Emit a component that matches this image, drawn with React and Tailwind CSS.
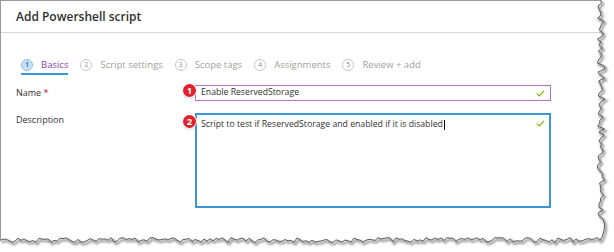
import React from "react";

const tabs = [
  { n: 1, label: "Basics", active: true },
  { n: 2, label: "Script settings" },
  { n: 3, label: "Scope tags" },
  { n: 4, label: "Assignments" },
  { n: 5, label: "Review + add" },
];

function rand(seed) {
  let s = seed;
  return () => {
    s = (s * 9301 + 49297) % 233280;
    return s / 233280;
  };
}

function tornPath() {
  const r = rand(7);
  const pts = [];
  for (let y = 0; y <= 238; y += 3) pts.push([601 + (r() - 0.5) * 8, y]);
  for (let x = 600; x >= 0; x -= 3) pts.push([x, 240 + (r() - 0.5) * 5]);
  return "M" + pts.map((p) => p[0].toFixed(1) + " " + p[1].toFixed(1)).join(" L");
}

function Check() {
  return (
    <svg width="9" height="7" viewBox="0 0 9 7" className="shrink-0">
      <path d="M0.8 3.6 L3.3 6 L8.2 0.9" fill="none" stroke="#6bb700" strokeWidth="1.1" />
    </svg>
  );
}

function Badge({ n, className }) {
  return (
    <span
      className={`absolute flex h-[13px] w-[13px] items-center justify-center rounded-full bg-[#e2212b] text-[9.5px] font-bold leading-none text-white shadow-[0_0_0_1px_#fff,0_1px_2px_rgba(0,0,0,0.5)] ${className}`}
    >
      {n}
    </span>
  );
}

export default function App() {
  const d = tornPath();
  return (
    <div className="relative h-[252px] w-[614px] overflow-hidden bg-white font-['Open_Sans',sans-serif] text-[#323130]">
      <div className="h-[240px] w-[601px] border-l border-t border-[#9a9a9a]">
        <div className="flex h-[32px] items-center border-b border-[#d6d6d6] pl-[15px] text-[12px] font-semibold">
          Add Powershell script
        </div>

        <div className="mt-[24px] flex items-center gap-[12px] pl-[20px]">
          {tabs.map((t) => (
            <div key={t.n} className="relative flex h-[16px] items-center gap-[8px]">
              <span
                className={
                  t.active
                    ? "flex h-[12px] w-[12px] items-center justify-center rounded-full border border-[#8cc0ea] bg-[#c7e0f4] text-[6.5px] font-semibold text-[#1a5fa0]"
                    : "flex h-[12px] w-[12px] items-center justify-center rounded-full border border-[#c8c6c4] bg-white text-[6.5px] text-[#8a8886]"
                }
              >
                {t.n}
              </span>
              <span className={t.active ? "text-[9.5px] text-[#8f44b0]" : "text-[9.5px] text-[#a19f9d]"}>{t.label}</span>
              {t.active && <span className="absolute bottom-[-2px] left-0 right-0 h-[2px] bg-[#3a96dd]" />}
            </div>
          ))}
        </div>

        <div className="mt-[12px] flex flex-col gap-[12px] pl-[15px]">
          <div className="flex items-start">
            <div className="w-[179px] pt-[1px] text-[9px] leading-[14px]">
              Name <span className="text-[#a4262c]">*</span>
            </div>
            <div className="relative flex h-[16px] w-[356px] items-center justify-between border border-[#b673c9] pl-[5px] pr-[5px] text-[8.7px]">
              <Badge n="1" className="left-[-13px] top-[-2px]" />
              <span>Enable ReservedStorage</span>
              <Check />
            </div>
          </div>
          <div className="flex items-start">
            <div className="w-[179px] text-[9px] leading-[14px]">Description</div>
            <div className="relative flex h-[95px] w-[356px] items-start justify-between border-2 border-[#3c96dc] pl-[4px] pr-[4px] pt-[3px] text-[8.7px]">
              <Badge n="2" className="left-[-14px] top-[0px]" />
              <span className="flex items-center">
                Script to test if ReservedStorage and enabled if it is disabled
                <span className="ml-[1px] inline-block h-[10px] w-px bg-black" />
              </span>
              <span className="pt-[2px]">
                <Check />
              </span>
            </div>
          </div>
        </div>
      </div>

      <svg className="pointer-events-none absolute left-0 top-0" width="614" height="252">
        <defs>
          <filter id="sh" x="-5%" y="-5%" width="110%" height="110%">
            <feGaussianBlur stdDeviation="1.2" />
          </filter>
        </defs>
        <path d={d + " L614 252 L614 0 Z"} fill="#fff" />
        <path d={d} fill="none" stroke="#000" strokeOpacity="0.45" strokeWidth="2" filter="url(#sh)" transform="translate(1.5 2)" />
        <path d={d} fill="none" stroke="#5e5e5e" strokeWidth="1" />
      </svg>
    </div>
  );
}
